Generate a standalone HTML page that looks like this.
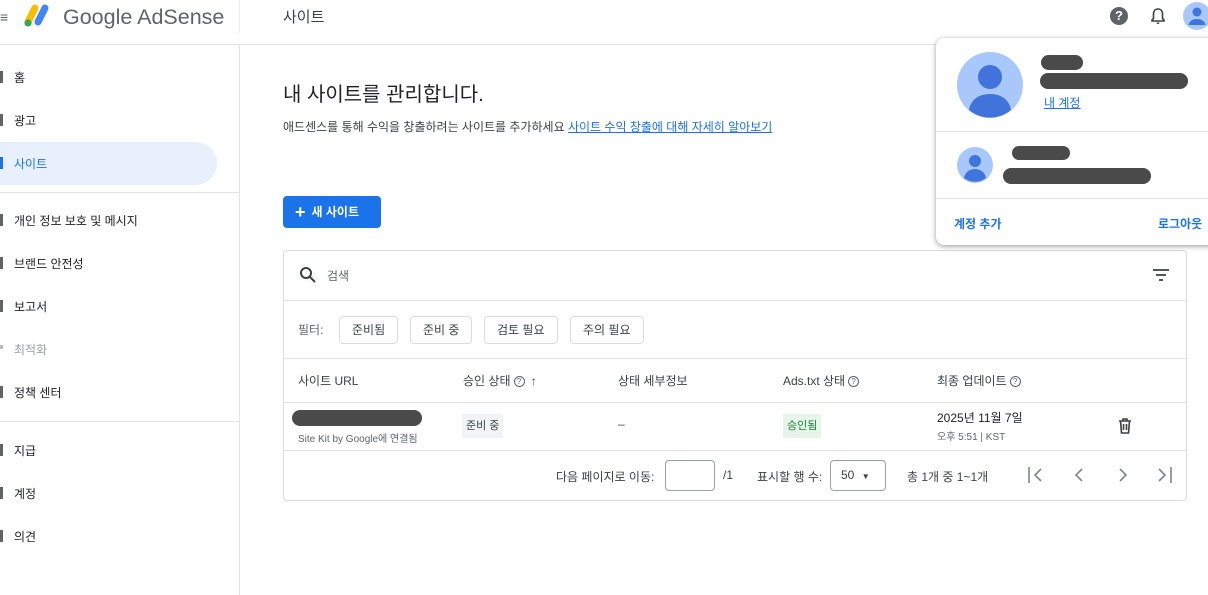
<!DOCTYPE html>
<html><head><meta charset="utf-8"><style>
*{box-sizing:border-box;margin:0;padding:0}
body{width:1208px;height:595px;overflow:hidden;background:#fff;font-family:"Liberation Sans","Noto Sans CJK KR",sans-serif;color:#202124;position:relative}
.a{position:absolute}
.nav{position:absolute;left:14px;font-size:12px;color:#202124}
.ic{position:absolute;left:0;width:3px;height:12px;background:#5f6368}
.chip{position:absolute;top:316px;height:28px;border:1px solid #dadce0;border-radius:4px;font-size:12px;line-height:26px;padding:0 12px;color:#3c4043}
.th{position:absolute;top:372px;font-size:12px;color:#3c4043}
.q{display:inline-block;width:11px;height:11px;border:1px solid #5f6368;border-radius:50%;font-size:8px;line-height:9px;text-align:center;vertical-align:middle;margin-left:3px;color:#5f6368}
.blk{position:absolute;background:#4a4a4a;border-radius:10px}
.pg{position:absolute;top:462px;font-size:22px;color:#80868b;line-height:22px}
</style></head><body>
<div class="a" style="left:0;top:9px;font-size:14px;color:#5f6368">≡</div>
<svg class="a" style="left:22px;top:2px" width="30" height="28" viewBox="0 0 30 28"><line x1="13" y1="6" x2="6" y2="20" stroke="#fbbc04" stroke-width="7" stroke-linecap="round"/><line x1="23" y1="6" x2="16" y2="20" stroke="#4285f4" stroke-width="7" stroke-linecap="round"/><circle cx="6" cy="21" r="3.6" fill="#34a853"/></svg>
<div class="a" style="left:63px;top:5px;font-size:21.5px;color:#5f6368">Google AdSense</div>
<div class="a" style="left:239px;top:0;width:1px;height:33px;background:#e8eaed"></div>
<div class="a" style="left:283px;top:6px;font-size:15px;color:#3c4043">사이트</div>
<div class="a" style="left:0;top:44px;width:1208px;height:1px;background:#e3e3e3"></div>
<div class="a" style="left:1110px;top:7px;width:18px;height:18px;border-radius:50%;background:#5f6368;color:#fff;font-size:13px;font-weight:bold;text-align:center;line-height:18px">?</div>
<svg class="a" style="left:1150px;top:7px" width="16" height="18" viewBox="0 0 16 18"><path d="M8 2c-3 0-4.5 2.3-4.5 5v4.5L2 13v1h12v-1l-1.5-1.5V7C12.5 4.3 11 2 8 2z" fill="none" stroke="#3c4043" stroke-width="1.6"/><path d="M6.5 15.5a1.5 1.5 0 0 0 3 0" fill="#3c4043"/></svg>
<svg class="a" style="left:1183px;top:2px" width="28" height="28" viewBox="0 0 28 28"><circle cx="14" cy="14" r="14" fill="#a8c7fa"/><circle cx="14" cy="10" r="4.5" fill="#4174db"/><path d="M5.5 23c1-4.5 4.5-6 8.5-6s7.5 1.5 8.5 6z" fill="#4174db"/></svg>
<div class="a" style="left:239px;top:45px;width:1px;height:550px;background:#e3e3e3"></div>
<div class="a" style="left:0;top:142px;width:217px;height:43px;background:#e8f0fe;border-radius:0 22px 22px 0"></div>
<div class="ic" style="top:71px;height:12px"></div><div class="nav" style="top:69px">홈</div>
<div class="ic" style="top:114px"></div><div class="nav" style="top:112px">광고</div>
<div class="ic" style="top:157px;background:#1a73e8"></div><div class="nav" style="top:155px;color:#1a73e8">사이트</div>
<div class="a" style="left:0;top:192px;width:239px;height:1px;background:#e3e3e3"></div>
<div class="ic" style="top:214px"></div><div class="nav" style="top:212px">개인 정보 보호 및 메시지</div>
<div class="ic" style="top:257px"></div><div class="nav" style="top:255px">브랜드 안전성</div>
<div class="ic" style="top:300px"></div><div class="nav" style="top:298px">보고서</div>
<div class="ic" style="top:345px;height:4px;background:#bbb"></div><div class="nav" style="top:341px;color:#9aa0a6">최적화</div>
<div class="ic" style="top:386px"></div><div class="nav" style="top:384px">정책 센터</div>
<div class="a" style="left:0;top:421px;width:239px;height:1px;background:#e3e3e3"></div>
<div class="ic" style="top:444px"></div><div class="nav" style="top:442px">지급</div>
<div class="ic" style="top:487px"></div><div class="nav" style="top:485px">계정</div>
<div class="ic" style="top:530px"></div><div class="nav" style="top:528px">의견</div>
<div class="a" style="left:283px;top:78px;font-size:20px;color:#202124">내 사이트를 관리합니다.</div>
<div class="a" style="left:283px;top:118px;font-size:12px;color:#3c4043">애드센스를 통해 수익을 창출하려는 사이트를 추가하세요 <span style="color:#1a73e8;text-decoration:underline">사이트 수익 창출에 대해 자세히 알아보기</span></div>
<div class="a" style="left:283px;top:196px;width:98px;height:32px;background:#1a73e8;border-radius:4px;color:#fff;font-size:12px;font-weight:bold;line-height:32px;padding-left:12px"><span style="font-size:18px;vertical-align:-2px;margin-right:6px">+</span>새 사이트</div>
<div class="a" style="left:283px;top:250px;width:904px;height:251px;border:1px solid #dadce0;border-radius:4px"></div>
<svg class="a" style="left:299px;top:266px" width="18" height="18" viewBox="0 0 18 18"><circle cx="7" cy="7" r="5" fill="none" stroke="#3c4043" stroke-width="2"/><line x1="10.5" y1="10.5" x2="16" y2="16" stroke="#3c4043" stroke-width="2"/></svg>
<div class="a" style="left:327px;top:267px;font-size:12px;color:#5f6368">검색</div>
<svg class="a" style="left:1152px;top:268px" width="18" height="14" viewBox="0 0 18 14"><path d="M1 2h16M4 7h10M7 12h4" stroke="#3c4043" stroke-width="1.8"/></svg>
<div class="a" style="left:284px;top:300px;width:902px;height:1px;background:#e3e3e3"></div>
<div class="a" style="left:298px;top:321px;font-size:12px;color:#5f6368">필터:</div>
<div class="chip" style="left:339px">준비됨</div>
<div class="chip" style="left:410px">준비 중</div>
<div class="chip" style="left:484px">검토 필요</div>
<div class="chip" style="left:570px">주의 필요</div>
<div class="a" style="left:284px;top:358px;width:902px;height:1px;background:#e3e3e3"></div>
<div class="th" style="left:298px">사이트 URL</div>
<div class="th" style="left:463px">승인 상태<span class="q">?</span> <span style="margin-left:3px">↑</span></div>
<div class="th" style="left:618px">상태 세부정보</div>
<div class="th" style="left:783px">Ads.txt 상태<span class="q">?</span></div>
<div class="th" style="left:937px">최종 업데이트<span class="q">?</span></div>
<div class="a" style="left:284px;top:402px;width:902px;height:1px;background:#e3e3e3"></div>
<div class="blk" style="left:292px;top:410px;width:130px;height:16px"></div>
<div class="a" style="left:298px;top:430px;font-size:10px;color:#5f6368">Site Kit by Google에 연결됨</div>
<div class="a" style="left:462px;top:414px;height:24px;padding:0 4px;background:#f1f3f4;font-size:11px;line-height:24px;color:#3c4043">준비 중</div>
<div class="a" style="left:618px;top:417px;font-size:12px;color:#3c4043">–</div>
<div class="a" style="left:783px;top:414px;height:24px;padding:0 4px;background:#e6f4ea;font-size:11px;line-height:24px;color:#188038">승인됨</div>
<div class="a" style="left:937px;top:409px;font-size:12px;color:#202124">2025년 11월 7일</div>
<div class="a" style="left:937px;top:428px;font-size:10px;color:#5f6368">오후 5:51 | KST</div>
<svg class="a" style="left:1118px;top:418px" width="14" height="16" viewBox="0 0 14 16"><path d="M1 3h12M5 3V1h4v2M2.5 3l1 12h7l1-12M5.5 6v6M8.5 6v6" fill="none" stroke="#3c4043" stroke-width="1.6"/></svg>
<div class="a" style="left:284px;top:450px;width:902px;height:1px;background:#e3e3e3"></div>
<div class="a" style="left:556px;top:468px;font-size:12px;color:#3c4043">다음 페이지로 이동:</div>
<div class="a" style="left:665px;top:460px;width:50px;height:31px;border:1px solid #9aa0a6;border-radius:4px"></div>
<div class="a" style="left:723px;top:468px;font-size:12px;color:#3c4043">/1</div>
<div class="a" style="left:757px;top:468px;font-size:12px;color:#3c4043">표시할 행 수:</div>
<div class="a" style="left:830px;top:460px;width:56px;height:31px;border:1px solid #9aa0a6;border-radius:4px;font-size:12px;line-height:29px;padding-left:10px;color:#3c4043">50 <span style="font-size:8px;margin-left:4px">▼</span></div>
<div class="a" style="left:907px;top:468px;font-size:12px;color:#3c4043">총 1개 중 1~1개</div>
<svg class="a" style="left:1026px;top:465px" width="150" height="20" viewBox="0 0 150 20"><g fill="none" stroke="#80868b" stroke-width="1.6"><path d="M3 2v16M15 4l-6 6 6 6"/><path d="M56 4l-6 6 6 6"/><path d="M94 4l6 6-6 6"/><path d="M133 4l6 6-6 6M145 2v16"/></g></svg>
<div class="a" style="left:936px;top:38px;width:290px;height:207px;background:#fff;border-radius:8px;box-shadow:0 1px 4px rgba(0,0,0,.3),0 2px 8px rgba(0,0,0,.12)"></div>
<svg class="a" style="left:957px;top:52px" width="66" height="66" viewBox="0 0 66 66"><circle cx="33" cy="33" r="33" fill="#a8c7fa"/><circle cx="33" cy="25" r="12" fill="#4174db"/><path d="M12 58c2-12 12-16 21-16s19 4 21 16a33 33 0 0 1-42 0z" fill="#4174db"/></svg>
<div class="blk" style="left:1041px;top:55px;width:42px;height:15px"></div>
<div class="blk" style="left:1040px;top:73px;width:148px;height:16px"></div>
<div class="a" style="left:1044px;top:94px;font-size:12px;color:#1a73e8;text-decoration:underline">내 계정</div>
<div class="a" style="left:936px;top:131px;width:272px;height:1px;background:#e3e3e3"></div>
<svg class="a" style="left:957px;top:147px" width="36" height="36" viewBox="0 0 36 36"><circle cx="18" cy="18" r="18" fill="#a8c7fa"/><circle cx="18" cy="14" r="6" fill="#4174db"/><path d="M7 31c1-6 6-9 11-9s10 3 11 9a18 18 0 0 1-22 0z" fill="#4174db"/></svg>
<div class="blk" style="left:1012px;top:146px;width:58px;height:14px"></div>
<div class="blk" style="left:1003px;top:168px;width:148px;height:16px"></div>
<div class="a" style="left:936px;top:198px;width:272px;height:1px;background:#e3e3e3"></div>
<div class="a" style="left:954px;top:215px;font-size:12px;color:#1a73e8;font-weight:bold">계정 추가</div>
<div class="a" style="left:1158px;top:215px;font-size:12px;color:#1a73e8;font-weight:bold">로그아웃</div>
</body></html>
